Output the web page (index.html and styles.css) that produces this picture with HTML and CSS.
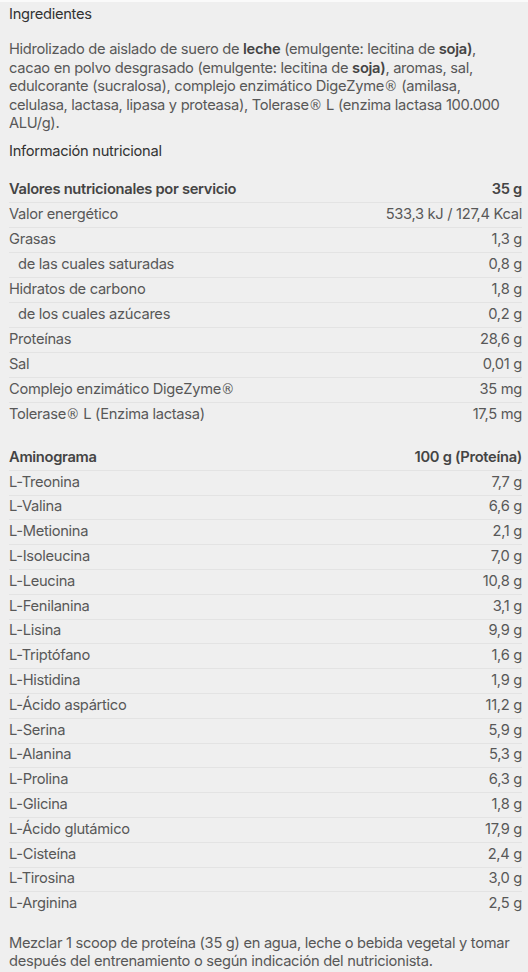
FILE: index.html
```html
<!DOCTYPE html>
<html>
<head>
    <meta charset='utf-8'>
    <title>Ingredientes</title>
    <meta name='viewport' content='width=device-width, initial-scale=1'>
    <link rel="stylesheet" href="styles.css">
</head>
<body>
    <div class="panel">
        <h2 class="title">Ingredientes</h2>
        <p class="ingredients">
            Hidrolizado de aislado de suero de <b>leche</b> (emulgente: lecitina de <b>soja)</b>,<br>
            cacao en polvo desgrasado (emulgente: lecitina de <b>soja)</b>, aromas, sal,<br>
            edulcorante (sucralosa), complejo enzimático DigeZyme<span class="reg">®</span> (amilasa,<br>
            celulasa, lactasa, lipasa y proteasa), Tolerase<span class="reg">®</span> L (enzima lactasa 100.000<br>
            ALU/g).
        </p>

        <h2 class="title title-info">Información nutricional</h2>

        <table class="table">
            <tr class="head"><td>Valores nutricionales por servicio</td><td>35 g</td></tr>
            <tr><td>Valor energético</td><td>533,3 kJ / 127,4 Kcal</td></tr>
            <tr><td>Grasas</td><td>1,3 g</td></tr>
            <tr class="sub"><td>de las cuales saturadas</td><td>0,8 g</td></tr>
            <tr><td>Hidratos de carbono</td><td>1,8 g</td></tr>
            <tr class="sub"><td>de los cuales azúcares</td><td>0,2 g</td></tr>
            <tr><td>Proteínas</td><td>28,6 g</td></tr>
            <tr><td>Sal</td><td>0,01 g</td></tr>
            <tr><td>Complejo enzimático DigeZyme<span class="reg">®</span></td><td>35 mg</td></tr>
            <tr class="last"><td>Tolerase<span class="reg">®</span> L (Enzima lactasa)</td><td>17,5 mg</td></tr>
        </table>

        <table class="table table-amino">
            <tr class="head"><td>Aminograma</td><td>100 g (Proteína)</td></tr>
            <tr><td>L-Treonina</td><td>7,7 g</td></tr>
            <tr><td>L-Valina</td><td>6,6 g</td></tr>
            <tr><td>L-Metionina</td><td>2,1 g</td></tr>
            <tr><td>L-Isoleucina</td><td>7,0 g</td></tr>
            <tr><td>L-Leucina</td><td>10,8 g</td></tr>
            <tr><td>L-Fenilanina</td><td>3,1 g</td></tr>
            <tr><td>L-Lisina</td><td>9,9 g</td></tr>
            <tr><td>L-Triptófano</td><td>1,6 g</td></tr>
            <tr><td>L-Histidina</td><td>1,9 g</td></tr>
            <tr><td>L-Ácido aspártico</td><td>11,2 g</td></tr>
            <tr><td>L-Serina</td><td>5,9 g</td></tr>
            <tr><td>L-Alanina</td><td>5,3 g</td></tr>
            <tr><td>L-Prolina</td><td>6,3 g</td></tr>
            <tr><td>L-Glicina</td><td>1,8 g</td></tr>
            <tr><td>L-Ácido glutámico</td><td>17,9 g</td></tr>
            <tr><td>L-Cisteína</td><td>2,4 g</td></tr>
            <tr><td>L-Tirosina</td><td>3,0 g</td></tr>
            <tr class="last"><td>L-Arginina</td><td>2,5 g</td></tr>
        </table>

        <p class="usage">
            Mezclar 1 scoop de proteína (35 g) en agua, leche o bebida vegetal y tomar<br>
            después del entrenamiento o según indicación del nutricionista.
        </p>
    </div>
</body>
</html>
```

FILE: styles.css
```css
* {
    margin: 0;
    padding: 0;
    box-sizing: border-box;
}

body {
    background: #efefef;
    font-family: Inter, "Noto Sans", sans-serif;
    font-size: 14.7px;
    color: #585858;
    letter-spacing: -0.3px;
}

.panel {
    border-top: 2px solid #fafafa;
    padding: 2px 6px 10px 9px;
}

.title {
    font-size: 14.7px;
    font-weight: 400;
    color: #333;
    line-height: 20px;
}

.ingredients {
    margin-top: 16px;
    line-height: 18.5px;
    white-space: nowrap;
}

.ingredients b {
    font-weight: 600;
    color: #444;
}

.title-info {
    margin-top: 8px;
}

.table {
    width: 100%;
    border-collapse: collapse;
    margin-top: 17px;
}

.table td {
    height: 25px;
    padding: 0 0 2px;
    border-bottom: 1px solid #e3e3e3;
    white-space: nowrap;
}

.table td:last-child {
    text-align: right;
}

.table .head td {
    font-weight: 600;
    color: #444;
}

.table .sub td:first-child {
    padding-left: 9px;
}

.table .last td {
    border-bottom: none;
}

.reg {
    font-family: "DejaVu Sans", sans-serif;
    font-size: 13.5px;
    letter-spacing: 0;
}

.table-amino {
    margin-top: 18px;
}

.table-amino td {
    height: 24.8px;
}

.usage {
    margin-top: 17px;
    line-height: 18.5px;
    white-space: nowrap;
}
```
